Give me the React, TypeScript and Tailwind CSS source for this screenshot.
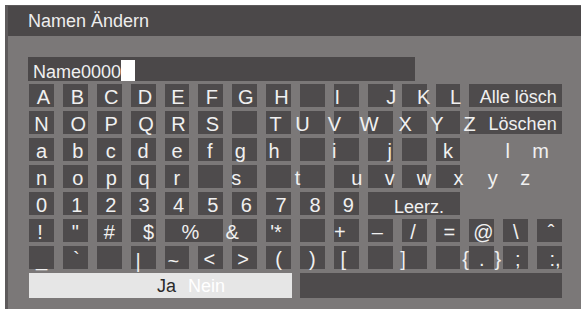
import type { ReactNode } from 'react'

type Key = {
  t?: string
  span?: string
  cls?: string
  clear?: boolean
  word?: boolean
  node?: ReactNode
}

const rows: Key[][] = [
  [
    { t: 'A', cls: 'ml-[4px]' },
    { t: 'B', cls: 'ml-[4px]' },
    { t: 'C', cls: 'ml-[4px]' },
    { t: 'D', cls: 'ml-[4px]' },
    { t: 'E', cls: 'ml-[2px]' },
    { t: 'F', cls: 'ml-[2px]' },
    { t: 'G', cls: 'ml-[2px]' },
    { t: 'H', cls: 'ml-[6px]' },
    {},
    { t: 'I', cls: 'mr-[18px]' },
    { t: 'J', cls: 'ml-[22px]' },
    { t: 'K', cls: 'ml-[19px]' },
    { t: 'L', cls: 'ml-[15px]' },
    { t: 'Alle lösch', span: 'col-span-3', word: true, cls: 'ml-[5px]' },
  ],
  [
    { t: 'N' },
    { t: 'O', cls: 'ml-[6px]' },
    { t: 'P', cls: 'ml-[4px]' },
    { t: 'Q', cls: 'ml-[6px]' },
    { t: 'R', cls: 'ml-[3px]' },
    { t: 'S', cls: 'ml-[3px]' },
    {},
    { t: 'T', cls: 'mr-[6px]' },
    { t: 'U', cls: 'mr-[20px]' },
    { t: 'V', cls: 'mr-[24px]' },
    { t: 'W', cls: 'mr-[22px]' },
    { t: 'X', cls: 'mr-[18px]' },
    { t: 'Y', cls: 'mr-[22px]' },
    {
      span: 'col-span-3',
      node: (
        <div className="flex w-full items-center">
          <span className="ml-[-6px] text-[20px] leading-[20px]">Z</span>
          <span className="ml-[13px] text-[18px] leading-[18px]">Löschen</span>
        </div>
      ),
    },
  ],
  [
    { t: 'a' },
    { t: 'b', cls: 'ml-[5px]' },
    { t: 'c', cls: 'ml-[3px]' },
    { t: 'd' },
    { t: 'e' },
    { t: 'f', cls: 'mr-[2px]' },
    { t: 'g', cls: 'mr-[9px]' },
    { t: 'h', cls: 'mr-[9px]' },
    {},
    { t: 'i', cls: 'mr-[24px]' },
    { t: 'j', cls: 'ml-[19px]' },
    {},
    { t: 'k' },
    { clear: true },
    { t: 'l', clear: true, cls: 'mr-[16px]' },
    { t: 'm', clear: true, cls: 'mr-[18px]' },
  ],
  [
    { t: 'n' },
    { t: 'o', cls: 'ml-[5px]' },
    { t: 'p', cls: 'ml-[4px]' },
    { t: 'q', cls: 'ml-[2px]' },
    { t: 'r' },
    {},
    { t: 's', cls: 'mr-[17px]' },
    {},
    { t: 't', cls: 'mr-[30px]' },
    { t: 'u', cls: 'ml-[21px]' },
    { t: 'v', cls: 'ml-[19px]' },
    { t: 'w', cls: 'ml-[20px]' },
    { t: 'x', cls: 'ml-[21px]' },
    { t: 'y', clear: true, cls: 'ml-[22px]' },
    { t: 'z', clear: true, cls: 'ml-[19px]' },
    { clear: true },
  ],
  [
    { t: '0' },
    { t: '1', cls: 'ml-[3px]' },
    { t: '2', cls: 'ml-[3px]' },
    { t: '3', cls: 'ml-[2px]' },
    { t: '4', cls: 'ml-[3px]' },
    { t: '5', cls: 'ml-[4px]' },
    { t: '6', cls: 'ml-[3px]' },
    { t: '7', cls: 'ml-[5px]' },
    { t: '8', cls: 'ml-[5px]' },
    { t: '9', cls: 'ml-[4px]' },
    { t: 'Leerz.', span: 'col-span-3', word: true, cls: 'ml-[10px] mt-[3px]' },
    { clear: true, span: 'col-span-3' },
  ],
  [
    { t: '!', cls: 'mr-[3px]' },
    { t: '"' },
    { t: '#' },
    { t: '$', cls: 'ml-[11px]' },
    { t: '%', span: 'col-span-2', cls: 'mr-[7px]' },
    { t: '&', cls: 'mr-[25px]' },
    { t: "'*", cls: 'mr-[5px]' },
    {},
    { t: '+', cls: 'mr-[13px]' },
    { t: '–', cls: 'mr-[6px]' },
    { t: '/', cls: 'mr-[2px]' },
    { t: '=', cls: 'ml-[3px]' },
    { t: '@', cls: 'ml-[3px]' },
    { t: '\\' },
    { t: 'ˆ', cls: 'ml-[3px]' },
  ],
  [
    { t: '_' },
    { t: '`', cls: 'ml-[2px]' },
    {},
    { t: '|', cls: 'mr-[10px] mt-[4px]' },
    { t: '~', cls: 'mr-[7px] mt-[4px]' },
    { t: '<', cls: 'mr-[3px]' },
    { t: '>', cls: 'mr-[3px]' },
    { t: '(' },
    { t: ')' },
    { t: '[', cls: 'mr-[6px]' },
    {},
    { t: ']', cls: 'mr-[22px]' },
    {},
    { t: '{\u2002.\u2002}' },
    { t: ';', cls: 'ml-[4px]' },
    { t: ':,', cls: 'ml-[11px]' },
  ],
]

function Cell({ k }: { k: Key }) {
  return (
    <div
      className={`${k.span ?? ''} flex items-center justify-center pt-[3px] ${
        k.clear ? '' : 'bg-[#4e4b4c]'
      }`}
    >
      {k.node}
      {k.t && (
        <span
          className={`${k.word ? 'text-[18px] leading-[18px]' : 'text-[20px] leading-[20px]'} whitespace-nowrap ${
            k.cls ?? ''
          }`}
        >
          {k.t}
        </span>
      )}
    </div>
  )
}

export default function App() {
  return (
    <div className="h-[309px] w-[581px] overflow-hidden bg-white pl-[5px] pt-[5px] font-['Liberation_Sans',Arial,sans-serif] text-[#f0f0f0]">
      <div className="h-[304px] w-[576px] border-l-[3px] border-t border-[#5d5a5b] bg-[#7b7878]">
        <div className="flex h-[30px] items-center bg-[#4b4849] pl-[20px] text-[18px] leading-[18px] text-[#ededed]">
          Namen Ändern
        </div>

        <div className="pl-[20px]">
          <div className="mt-[21px] flex h-[24px] w-[387px] items-end bg-[#4b4849] pl-[5px]">
            <span className="text-[18px] leading-[18px]">Name0000</span>
            <span className="h-[21px] w-[14px] bg-white" />
          </div>

          <div className="ml-[1px] mt-[3px] w-[533px]">
            <div className="grid auto-rows-[23px] grid-cols-[repeat(16,minmax(0,1fr))] gap-x-[9px] gap-y-[4px]">
              {rows.map((row, r) => row.map((k, i) => <Cell key={`${r}-${i}`} k={k} />))}
            </div>

            <div className="mt-[4px] grid h-[25px] grid-cols-2 gap-x-[8px]">
              <div className="flex items-center bg-[#e6e6e6] pl-[128px] text-[18px] leading-[18px]">
                <span className="text-[#2a2a2a]">Ja</span>
                <span className="ml-[12px] text-white">Nein</span>
              </div>
              <div className="bg-[#4e4b4c]" />
            </div>
          </div>
        </div>
      </div>
    </div>
  )
}
